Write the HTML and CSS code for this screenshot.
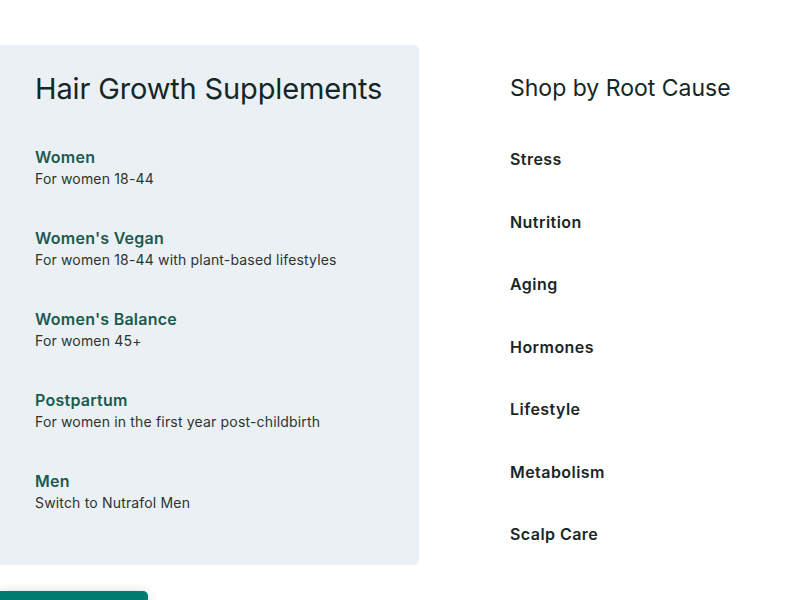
FILE: index.html
```html
<!DOCTYPE html>
<html>
<head>
<meta charset="utf-8">
<link rel="stylesheet" href="styles.css">
</head>
<body>
<div class="page">
  <div class="left">
    <section class="panel">
      <h2 class="panel-title">Hair Growth Supplements</h2>
      <ul class="products">
        <li><a class="p-name">Women</a><span class="p-desc">For women 18-44</span></li>
        <li><a class="p-name">Women's Vegan</a><span class="p-desc">For women 18-44 with plant-based lifestyles</span></li>
        <li><a class="p-name">Women's Balance</a><span class="p-desc">For women 45+</span></li>
        <li><a class="p-name">Postpartum</a><span class="p-desc">For women in the first year post-childbirth</span></li>
        <li><a class="p-name">Men</a><span class="p-desc">Switch to Nutrafol Men</span></li>
      </ul>
    </section>
    <div class="cta"></div>
  </div>
  <section class="causes">
    <h2 class="causes-title">Shop by Root Cause</h2>
    <ul class="cause-list">
      <li>Stress</li>
      <li>Nutrition</li>
      <li>Aging</li>
      <li>Hormones</li>
      <li>Lifestyle</li>
      <li>Metabolism</li>
      <li>Scalp Care</li>
    </ul>
  </section>
</div>
</body>
</html>
```
FILE: styles.css
```css
* { box-sizing: border-box; }
html, body { margin: 0; padding: 0; background: #fff; }
body { font-family: Inter, "Noto Sans", sans-serif; color: #1b2a2a; overflow: hidden; height: 600px; }
.page { display: flex; padding-top: 45px; }
.left { width: 419px; display: flex; flex-direction: column; }
.panel {
  background: #ebf0f4;
  border-radius: 0 5px 5px 0;
  height: 520px;
  padding: 26px 20px 0 35px;
}
.panel-title {
  margin: 0;
  font-weight: 400;
  font-size: 29px;
  line-height: 36px;
  letter-spacing: -0.15px;
  color: #142725;
}
.products { list-style: none; margin: 39px 0 0; padding: 0; display: flex; flex-direction: column; gap: 37px; }
.products li { display: flex; flex-direction: column; }
.p-name { font-size: 16px; font-weight: 600; line-height: 22px; letter-spacing: 0.25px; color: #1a5b4f; }
.p-desc { font-size: 14px; line-height: 22px; letter-spacing: 0.17px; color: #2b3433; }
.cta {
  margin-top: 26px;
  width: 148px;
  height: 30px;
  background: #007d71;
  border-radius: 0 5px 0 0;
  box-shadow: 0 0 10px rgba(0,0,0,0.15);
}
.causes { padding-left: 91px; padding-top: 28px; }
.causes-title { margin: 0; font-weight: 400; font-size: 23px; line-height: 30px; color: #142725; }
.cause-list { list-style: none; margin: 45px 0 0; padding: 0; display: flex; flex-direction: column; gap: 40.5px; }
.cause-list li { font-size: 16px; font-weight: 600; line-height: 22px; letter-spacing: 0.45px; color: #1b2626; }
```
